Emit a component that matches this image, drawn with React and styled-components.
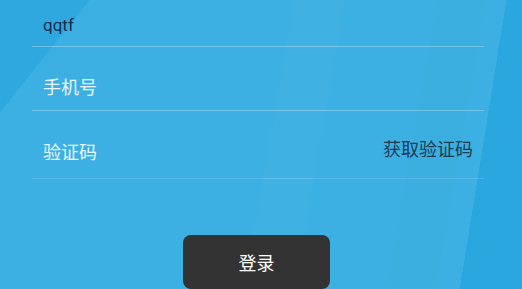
import React from "react";
import styled, { createGlobalStyle } from "styled-components";

const Global = createGlobalStyle`
  html, body { margin: 0; padding: 0; }
  body {
    width: 522px;
    height: 289px;
    overflow: hidden;
    font-family: Roboto, "Noto Sans CJK SC", sans-serif;
  }
`;

const Screen = styled.div`
  width: 522px;
  height: 289px;
  overflow: hidden;
  background:
    linear-gradient(128.5deg, #2fa8e0 70px, transparent 70px),
    linear-gradient(99.2deg, transparent 500px, #2ba7e0 500px),
    linear-gradient(100deg, transparent 290px, rgba(255,255,255,0.015) 290px, rgba(255,255,255,0.015) 340px, transparent 340px),
    linear-gradient(100deg, transparent 430px, rgba(0,0,0,0.012) 430px, rgba(0,0,0,0.012) 480px, transparent 480px),
    #3cb0e3;
`;

const Form = styled.div`
  width: 452px;
  margin-left: 32px;
  display: flex;
  flex-direction: column;
`;

const Row = styled.div`
  padding: 0 11px ${(p) => p.$pb}px;
  box-sizing: content-box;
  display: flex;
  align-items: flex-end;
  justify-content: space-between;
  border-bottom: 1px solid rgba(255, 255, 255, ${(p) => p.$line});
  height: ${(p) => p.$h - p.$pb}px;
`;

const Field = styled.span`
  font-size: ${(p) => (p.$latin ? 17 : 18)}px;
  line-height: 20px;
  color: ${(p) => (p.$filled ? "#0f2f4a" : "#eaf6fc")};
`;

const CodeLink = styled.span`
  font-size: 18px;
  line-height: 20px;
  color: #1c3b52;
  margin-bottom: 3px;
`;

const ButtonWrap = styled.div`
  display: flex;
  justify-content: center;
  padding-right: 9px;
  margin-top: 56px;
`;

const LoginButton = styled.button`
  width: 147px;
  height: 54px;
  border: none;
  border-radius: 8px;
  background: #333333;
  color: #ffffff;
  font-family: Roboto, "Noto Sans CJK SC", sans-serif;
  font-size: 18px;
  padding: 0;
`;

export default function App() {
  return (
    <>
      <Global />
      <Screen>
        <Form>
          <Row $h={46} $pb={11} $line={0.28}>
            <Field $filled $latin>qqtf</Field>
          </Row>
          <Row $h={63} $pb={12} $line={0.28}>
            <Field>手机号</Field>
          </Row>
          <Row $h={67} $pb={15} $line={0.14}>
            <Field>验证码</Field>
            <CodeLink>获取验证码</CodeLink>
          </Row>
        </Form>
        <ButtonWrap>
          <LoginButton>登录</LoginButton>
        </ButtonWrap>
      </Screen>
    </>
  );
}
